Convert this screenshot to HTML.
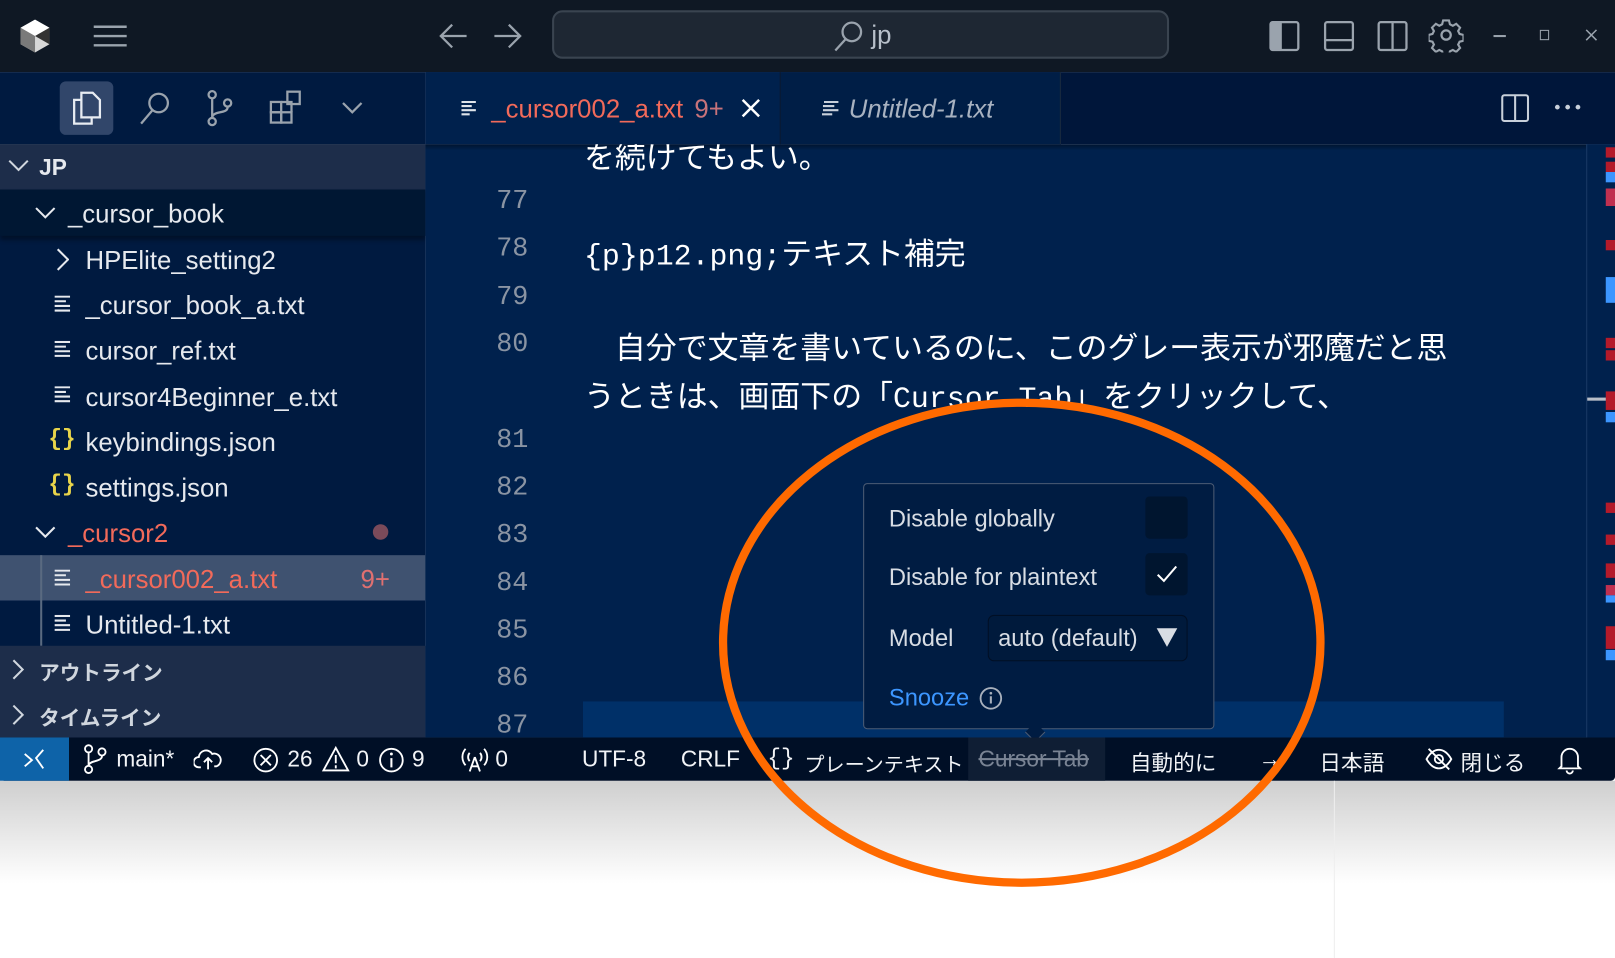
<!DOCTYPE html>
<html><head><meta charset="utf-8"><style>
*{margin:0;padding:0;box-sizing:border-box}
html,body{width:1615px;height:958px;overflow:hidden;background:#fff}
#w{position:absolute;left:0;top:0;width:1568px;height:930px;transform:scale(1.03);transform-origin:0 0;font-family:"Liberation Sans","Noto Sans CJK JP",sans-serif;}
.a{position:absolute}
.shadow{position:absolute;left:0;top:758px;width:1568px;height:100px;background:linear-gradient(#cfcfcf,#fff)}
.t{color:#e6e9ee;font-size:25px;white-space:nowrap}
.ln{position:absolute;right:0;width:60px;text-align:right;color:#8a94a3;font-family:"Liberation Mono",monospace;font-size:26px}
.code{position:absolute;left:567px;color:#fff;font-size:30px;white-space:nowrap;font-family:"Liberation Sans","Noto Sans CJK JP",sans-serif}
.mono{font-family:"Liberation Mono",monospace;font-size:29px}
.ic{position:absolute}
.sb{position:absolute;top:724px;color:#f2f4f7;font-size:22px;white-space:nowrap}
</style></head><body><div id="w">
<div class="shadow"></div>
<!-- title bar -->
<div class="a" style="left:0;top:0;width:1568px;height:70px;background:#0f1824"></div>
<svg class="ic" style="left:18px;top:18px" width="32" height="34" viewBox="0 0 32 34"><path d="M16 1L30 9V25L16 33L2 25V9Z" fill="#d8d8d8"/><path d="M16 17L30 9L16 1L2 9Z" fill="#fff"/><path d="M16 17V33L2 25V9Z" fill="#7a7a7a"/><path d="M16 17L30 9V25Z" fill="#333"/></svg>
<svg class="ic" style="left:90px;top:24px" width="34" height="22"><path d="M1 2H33M1 11H33M1 20H33" stroke="#9aa3ad" stroke-width="2.4"/></svg>
<svg class="ic" style="left:426px;top:22px" width="28" height="26"><path d="M27 13H3M13 2L2 13L13 24" stroke="#9aa3ad" stroke-width="2.2" fill="none"/></svg>
<svg class="ic" style="left:479px;top:22px" width="28" height="26"><path d="M1 13H25M15 2L26 13L15 24" stroke="#9aa3ad" stroke-width="2.2" fill="none"/></svg>
<div class="a" style="left:536px;top:10px;width:599px;height:47px;background:#1e2733;border:2px solid #3a4450;border-radius:10px"></div>
<svg class="ic" style="left:808px;top:20px" width="32" height="30"><circle cx="19" cy="11" r="9" stroke="#9aa3ad" stroke-width="2.2" fill="none"/><path d="M13 18L3 29" stroke="#9aa3ad" stroke-width="2.2"/></svg>
<div class="a t" style="left:846px;top:20px;color:#b8c0ca;font-size:25px">jp</div>
<svg class="ic" style="left:1232px;top:20px" width="30" height="30"><rect x="1.5" y="1.5" width="27" height="27" rx="2" stroke="#9aa3ad" stroke-width="2.2" fill="none"/><rect x="1.5" y="1.5" width="11" height="27" fill="#9aa3ad"/></svg>
<svg class="ic" style="left:1285px;top:20px" width="30" height="30"><rect x="1.5" y="1.5" width="27" height="27" rx="2" stroke="#9aa3ad" stroke-width="2.2" fill="none"/><path d="M1.5 19H28.5" stroke="#9aa3ad" stroke-width="2.2"/></svg>
<svg class="ic" style="left:1337px;top:20px" width="30" height="30"><rect x="1.5" y="1.5" width="27" height="27" rx="2" stroke="#9aa3ad" stroke-width="2.2" fill="none"/><path d="M15 1.5V28.5" stroke="#9aa3ad" stroke-width="2.2"/></svg>
<svg class="ic" style="left:1387px;top:17px" width="34" height="34" viewBox="0 0 34 34"><g stroke="#9aa3ad" stroke-width="2.2" fill="none"><circle cx="17" cy="17" r="4.5"/><path d="M14 2h6l1 4 3 1.5 3.5-2 4 4-2 3.5 1.5 3 4 1v6l-4 1-1.5 3 2 3.5-4 4-3.5-2-3 1.5-1 4h-6l-1-4-3-1.5-3.5 2-4-4 2-3.5-1.5-3-4-1v-6l4-1 1.5-3-2-3.5 4-4 3.5 2 3-1.5z" transform="scale(.94) translate(1 1)"/></g></svg>
<div class="a" style="left:1450px;top:34px;width:12px;height:1.5px;background:#9aa3ad"></div>
<div class="a" style="left:1495px;top:29px;width:9px;height:10px;border:1.5px solid #9aa3ad"></div>
<svg class="ic" style="left:1539px;top:28px" width="12" height="12"><path d="M1 1L11 11M11 1L1 11" stroke="#9aa3ad" stroke-width="1.5"/></svg>
<!-- row 2 -->
<div class="a" style="left:0;top:70px;width:413px;height:70px;background:#001a40"></div>
<div class="a" style="left:58px;top:79px;width:52px;height:52px;background:#31466a;border-radius:6px"></div>
<svg class="ic" style="left:69px;top:88px" width="30" height="34"><g stroke="#e8ecf2" stroke-width="2.2" fill="none"><path d="M10 2H21L28 9V26H10Z"/><path d="M10 9H3V32H20V26"/></g></svg>
<svg class="ic" style="left:134px;top:88px" width="32" height="34"><circle cx="20" cy="12" r="9" stroke="#9aa3ad" stroke-width="2.2" fill="none"/><path d="M14 19L3 32" stroke="#9aa3ad" stroke-width="2.2"/></svg>
<svg class="ic" style="left:199px;top:87px" width="30" height="36"><g stroke="#9aa3ad" stroke-width="2.2" fill="none"><circle cx="7" cy="5" r="3.5"/><circle cx="7" cy="31" r="3.5"/><circle cx="22" cy="13" r="3.5"/><path d="M7 9V27M22 17C22 24 8 20 7 27"/></g></svg>
<svg class="ic" style="left:261px;top:87px" width="34" height="36"><g stroke="#9aa3ad" stroke-width="2.2" fill="none"><rect x="2" y="12" width="10" height="10"/><rect x="12" y="22" width="10" height="10" /><rect x="2" y="22" width="10" height="10"/><rect x="18" y="2" width="12" height="12"/><path d="M12 12H22V22"/></g></svg>
<svg class="ic" style="left:331px;top:98px" width="22" height="14"><path d="M2 2L11 11L20 2" stroke="#9aa3ad" stroke-width="2.2" fill="none"/></svg>
<div class="a" style="left:413px;top:70px;width:1155px;height:70px;background:#00163a"></div>
<div class="a" style="left:413px;top:70px;width:345px;height:70px;background:#00214d;border-right:1px solid #0c1a2e"></div>
<div class="a" style="left:758px;top:70px;width:272px;height:70px;background:#001e46;border-right:1px solid #1a2a3e"></div>
<svg class="ic" style="left:448px;top:97px" width="18" height="16"><path d="M0 2H14M0 6H10M0 10H14M0 14H8" stroke="#dfe4ea" stroke-width="2"/></svg>
<div class="a t" style="left:477px;top:92px;color:#f26a5a">_cursor002_a.txt <span style="color:#c8737a;margin-left:4px">9+</span></div>
<svg class="ic" style="left:719px;top:95px" width="20" height="20"><path d="M2 2L18 18M18 2L2 18" stroke="#fff" stroke-width="2.4"/></svg>
<svg class="ic" style="left:798px;top:97px" width="18" height="16"><path d="M2 2H16M1 6H12M1 10H16M0 14H10" stroke="#c8d0da" stroke-width="2"/></svg>
<div class="a t" style="left:824px;top:92px;color:#a8b2c0;font-style:italic">Untitled-1.txt</div>
<svg class="ic" style="left:1457px;top:91px" width="28" height="28"><rect x="1.5" y="1.5" width="25" height="25" rx="2" stroke="#c8d0da" stroke-width="2" fill="none"/><path d="M14 1.5V26.5" stroke="#c8d0da" stroke-width="2"/></svg>
<svg class="ic" style="left:1508px;top:100px" width="30" height="8"><circle cx="4" cy="4" r="2.3" fill="#c8d0da"/><circle cx="14" cy="4" r="2.3" fill="#c8d0da"/><circle cx="24" cy="4" r="2.3" fill="#c8d0da"/></svg>
<!-- sidebar -->
<div class="a" style="left:0;top:140px;width:413px;height:576px;background:#001a40"></div>
<div class="a" style="left:0;top:140px;width:413px;height:44px;background:#1d2d4a"></div>
<svg class="ic" style="left:8px;top:155px" width="20" height="12"><path d="M1 1L10 10L19 1" stroke="#d0d6de" stroke-width="2" fill="none"/></svg>
<div class="a t" style="left:38px;top:150px;font-weight:bold;font-size:22px">JP</div>
<div class="a" style="left:0;top:184px;width:413px;height:45px;background:#001733;box-shadow:0 4px 4px rgba(0,0,0,.35)"></div>
<svg class="ic" style="left:34px;top:201px" width="20" height="12"><path d="M1 1L10 10L19 1" stroke="#e6e9ee" stroke-width="2" fill="none"/></svg>
<div class="a t" style="left:66px;top:194px">_cursor_book</div>
<svg class="ic" style="left:55px;top:241px" width="12" height="22"><path d="M1 1L11 11L1 21" stroke="#e6e9ee" stroke-width="2" fill="none"/></svg>
<div class="a t" style="left:83px;top:239px">HPElite_setting2</div>
<svg class="ic" style="left:53px;top:287px" width="18" height="16"><path d="M0 1H15M0 5.5H11M0 10H15M0 14.5H15" stroke="#e6e9ee" stroke-width="2"/></svg>
<div class="a t" style="left:83px;top:283px">_cursor_book_a.txt</div>
<svg class="ic" style="left:53px;top:331px" width="18" height="16"><path d="M0 1H15M0 5.5H11M0 10H15M0 14.5H15" stroke="#e6e9ee" stroke-width="2"/></svg>
<div class="a t" style="left:83px;top:327px">cursor_ref.txt</div>
<svg class="ic" style="left:53px;top:375px" width="18" height="16"><path d="M0 1H15M0 5.5H11M0 10H15M0 14.5H15" stroke="#e6e9ee" stroke-width="2"/></svg>
<div class="a t" style="left:83px;top:372px">cursor4Beginner_e.txt</div>
<div class="a" style="left:47px;top:414px;color:#e8d44a;font-size:22px;font-weight:bold;font-family:'Liberation Mono',monospace">{}</div>
<div class="a t" style="left:83px;top:416px">keybindings.json</div>
<div class="a" style="left:47px;top:458px;color:#e8d44a;font-size:22px;font-weight:bold;font-family:'Liberation Mono',monospace">{}</div>
<div class="a t" style="left:83px;top:460px">settings.json</div>
<svg class="ic" style="left:34px;top:511px" width="20" height="12"><path d="M1 1L10 10L19 1" stroke="#e6e9ee" stroke-width="2" fill="none"/></svg>
<div class="a t" style="left:66px;top:504px;color:#f26a5a">_cursor2</div>
<div class="a" style="left:362px;top:509px;width:15px;height:15px;border-radius:50%;background:#7a4a5a"></div>
<div class="a" style="left:0;top:539px;width:413px;height:44px;background:#3f5270"></div>
<div class="a" style="left:39px;top:539px;width:2px;height:88px;background:#5a6a80"></div>
<svg class="ic" style="left:53px;top:553px" width="18" height="16"><path d="M0 1H15M0 5.5H11M0 10H15M0 14.5H15" stroke="#e6e9ee" stroke-width="2"/></svg>
<div class="a t" style="left:83px;top:549px;color:#f26a5a">_cursor002_a.txt</div>
<div class="a t" style="left:350px;top:549px;color:#e07070">9+</div>
<svg class="ic" style="left:53px;top:597px" width="18" height="16"><path d="M0 1H15M0 5.5H11M0 10H15M0 14.5H15" stroke="#e6e9ee" stroke-width="2"/></svg>
<div class="a t" style="left:83px;top:593px">Untitled-1.txt</div>
<div class="a" style="left:0;top:627px;width:413px;height:89px;background:#1d2d4a"></div>
<svg class="ic" style="left:12px;top:640px" width="12" height="20"><path d="M1 1L10 10L1 19" stroke="#d0d6de" stroke-width="2" fill="none"/></svg>
<div class="a t" style="left:38px;top:637px;font-size:20px;font-weight:bold;color:#d0d6de">アウトライン</div>
<svg class="ic" style="left:12px;top:684px" width="12" height="20"><path d="M1 1L10 10L1 19" stroke="#d0d6de" stroke-width="2" fill="none"/></svg>
<div class="a t" style="left:38px;top:681px;font-size:20px;font-weight:bold;color:#d0d6de">タイムライン</div>
<!-- editor -->
<div class="a" style="left:413px;top:140px;width:1155px;height:576px;background:#00214d;overflow:hidden">
 <div class="a" style="left:0;top:0;width:1155px;height:6px;background:linear-gradient(rgba(0,0,0,.4),rgba(0,0,0,0))"></div>
</div>
<div class="a" style="left:566px;top:681px;width:894px;height:35px;background:#003068"></div>
<div class="a" style="left:1540px;top:140px;width:28px;height:576px;background:#00214d;border-left:1px solid #1a3a66"></div>
<div class="a" style="left:1541px;top:386px;width:27px;height:3px;background:#b8bec8"></div>
<div class="a" style="left:1559px;top:143px;width:9px;height:10px;background:#b41a2a"></div>
<div class="a" style="left:1559px;top:157px;width:9px;height:10px;background:#b41a2a"></div>
<div class="a" style="left:1559px;top:167px;width:9px;height:10px;background:#3c96ff"></div>
<div class="a" style="left:1559px;top:183px;width:9px;height:17px;background:#c03050"></div>
<div class="a" style="left:1559px;top:233px;width:9px;height:10px;background:#b41a2a"></div>
<div class="a" style="left:1559px;top:269px;width:9px;height:25px;background:#3c96ff"></div>
<div class="a" style="left:1559px;top:328px;width:9px;height:10px;background:#b41a2a"></div>
<div class="a" style="left:1559px;top:340px;width:9px;height:10px;background:#b41a2a"></div>
<div class="a" style="left:1559px;top:380px;width:9px;height:18px;background:#b41a2a"></div>
<div class="a" style="left:1559px;top:400px;width:9px;height:10px;background:#3c96ff"></div>
<div class="a" style="left:1559px;top:488px;width:9px;height:10px;background:#b41a2a"></div>
<div class="a" style="left:1559px;top:519px;width:9px;height:10px;background:#b41a2a"></div>
<div class="a" style="left:1559px;top:547px;width:9px;height:14px;background:#b41a2a"></div>
<div class="a" style="left:1559px;top:568px;width:9px;height:10px;background:#c03050"></div>
<div class="a" style="left:1559px;top:578px;width:9px;height:7px;background:#3c96ff"></div>
<div class="a" style="left:1559px;top:608px;width:9px;height:22px;background:#b41a2a"></div>
<div class="a" style="left:1559px;top:631px;width:9px;height:10px;background:#3c96ff"></div>
<div class="a" style="left:413px;top:140px;width:1127px;height:576px;overflow:hidden">
 <div class="code" style="left:154px;top:-12px">を続けてもよい。</div>
 <div class="ln" style="left:40px;top:40px">77</div>
 <div class="ln" style="left:40px;top:86px">78</div>
 <div class="code" style="left:154px;top:82px"><span class="mono">{p}p12.png;</span>テキスト補完</div>
 <div class="ln" style="left:40px;top:133px">79</div>
 <div class="ln" style="left:40px;top:179px">80</div>
 <div class="code" style="left:154px;top:173px">　自分で文章を書いているのに、このグレー表示が邪魔だと思</div>
 <div class="code" style="left:154px;top:220px">うときは、画面下の「<span class="mono">Cursor Tab</span>」をクリックして、</div>
 <div class="ln" style="left:40px;top:272px">81</div>
 <div class="ln" style="left:40px;top:318px">82</div>
 <div class="ln" style="left:40px;top:364px">83</div>
 <div class="ln" style="left:40px;top:411px">84</div>
 <div class="ln" style="left:40px;top:457px">85</div>
 <div class="ln" style="left:40px;top:503px">86</div>
 <div class="ln" style="left:40px;top:549px">87</div>
</div>
<!-- popup -->
<div class="a" style="left:838px;top:469px;width:341px;height:239px;background:#001c42;border:1.5px solid #4c5c74;border-radius:4px"></div>
<div class="a" style="left:998px;top:704px;width:14px;height:14px;background:#001c42;border-right:1.5px solid #4c5c74;border-bottom:1.5px solid #4c5c74;transform:rotate(45deg)"></div>
<div class="a t" style="left:863px;top:490px;color:#d8dde4;font-size:23px">Disable globally</div>
<div class="a" style="left:1112px;top:482px;width:41px;height:41px;background:#00152f;border-radius:4px"></div>
<div class="a t" style="left:863px;top:547px;color:#d8dde4;font-size:23px">Disable for plaintext</div>
<div class="a" style="left:1112px;top:537px;width:41px;height:41px;background:#00152f;border-radius:4px"></div>
<svg class="ic" style="left:1122px;top:548px" width="22" height="18"><path d="M2 10L8 16L20 2" stroke="#fff" stroke-width="2" fill="none"/></svg>
<div class="a t" style="left:863px;top:606px;color:#d8dde4;font-size:23px">Model</div>
<div class="a" style="left:959px;top:597px;width:194px;height:45px;background:#001a3c;border:1px solid #000f25;border-radius:6px"></div>
<div class="a t" style="left:969px;top:606px;color:#d8dde4;font-size:23px">auto (default)</div>
<svg class="ic" style="left:1122px;top:609px" width="22" height="20"><path d="M1 1H21L11 19Z" fill="#d8dde4"/></svg>
<div class="a t" style="left:863px;top:664px;color:#3c96ff;font-size:23px">Snooze</div>
<svg class="ic" style="left:950px;top:666px" width="24" height="24"><circle cx="12" cy="12" r="10" stroke="#a8b0bc" stroke-width="1.8" fill="none"/><path d="M12 10V17" stroke="#a8b0bc" stroke-width="2"/><circle cx="12" cy="7" r="1.3" fill="#a8b0bc"/></svg>
<!-- status bar -->
<div class="a" style="left:0;top:716px;width:1568px;height:42px;background:#000f26;border-radius:0 0 4px 4px"></div>
<div class="a" style="left:0;top:716px;width:67px;height:42px;background:#0e63a8"></div>
<svg class="ic" style="left:22px;top:726px" width="22" height="22"><path d="M2 6L9 12L2 18M20 2L13 10L20 20" stroke="#fff" stroke-width="1.8" fill="none"/></svg>
<div class="a" style="left:940px;top:716px;width:133px;height:42px;background:#0f1e34"></div>
<svg class="ic" style="left:80px;top:722px" width="26" height="30"><g stroke="#fff" stroke-width="1.8" fill="none"><circle cx="6" cy="5" r="3.5"/><circle cx="6" cy="25" r="3.5"/><circle cx="19" cy="8" r="3.5"/><path d="M6 9V21M19 12C19 18 7 16 6 21"/></g></svg>
<div class="sb" style="left:113px">main*</div>
<svg class="ic" style="left:188px;top:726px" width="28" height="22"><path d="M7 19H5a5 5 0 0 1 0-10a7 7 0 0 1 13-3a6 6 0 0 1 4 12h-2M14 21V10M10 14L14 10L18 14" stroke="#fff" stroke-width="1.8" fill="none"/></svg>
<svg class="ic" style="left:245px;top:725px" width="26" height="26"><circle cx="13" cy="13" r="11" stroke="#fff" stroke-width="1.8" fill="none"/><path d="M8 8L18 18M18 8L8 18" stroke="#fff" stroke-width="1.8"/></svg>
<div class="sb" style="left:279px">26</div>
<svg class="ic" style="left:312px;top:724px" width="28" height="26"><path d="M14 2L26 24H2Z" stroke="#fff" stroke-width="1.8" fill="none"/><path d="M14 9V17M14 19V22" stroke="#fff" stroke-width="1.8"/></svg>
<div class="sb" style="left:346px">0</div>
<svg class="ic" style="left:367px;top:725px" width="26" height="26"><circle cx="13" cy="13" r="11" stroke="#fff" stroke-width="1.8" fill="none"/><path d="M13 11V20" stroke="#fff" stroke-width="2"/><circle cx="13" cy="7" r="1.4" fill="#fff"/></svg>
<div class="sb" style="left:400px">9</div>
<svg class="ic" style="left:447px;top:724px" width="28" height="26"><g stroke="#fff" stroke-width="1.8" fill="none"><path d="M5 3a12 12 0 0 0 0 16M23 3a12 12 0 0 1 0 16M9 7a6 6 0 0 0 0 8M19 7a6 6 0 0 1 0 8M14 11L9 25M14 11L19 25M11 20H17"/></g></svg>
<div class="sb" style="left:481px">0</div>
<div class="sb" style="left:565px">UTF-8</div>
<div class="sb" style="left:661px">CRLF</div>
<div class="sb" style="left:745px;font-family:'Liberation Mono',monospace">{}</div>
<div class="sb" style="left:781px;font-size:19.5px;top:726px">プレーンテキスト</div>
<div class="sb" style="left:950px;color:#7a8494;text-decoration:line-through">Cursor Tab</div>
<div class="sb" style="left:1097px;font-size:21px;top:725px">自動的に</div>
<div class="sb" style="left:1222px">→</div>
<div class="sb" style="left:1281px;font-size:21px;top:725px">日本語</div>
<svg class="ic" style="left:1383px;top:725px" width="28" height="24"><g stroke="#fff" stroke-width="1.8" fill="none"><path d="M2 12C6 5 10 3 14 3S22 5 26 12C22 19 18 21 14 21S6 19 2 12Z"/><circle cx="14" cy="12" r="4"/><path d="M4 2L24 22"/></g></svg>
<div class="sb" style="left:1418px;font-size:21px;top:725px">閉じる</div>
<svg class="ic" style="left:1512px;top:724px" width="24" height="28"><path d="M4 20V11a8 8 0 0 1 16 0V20L22 22H2ZM9 24a3 3 0 0 0 6 0" stroke="#fff" stroke-width="1.8" fill="none"/></svg>
<div class="a" style="left:1295px;top:758px;width:1px;height:172px;background:#eee"></div>
<!-- orange ellipse -->
<svg class="a" style="left:0;top:0" width="1568" height="930"><ellipse cx="992" cy="624" rx="290" ry="233" stroke="#ff6a00" stroke-width="8" fill="none"/></svg>
</div></body></html>
